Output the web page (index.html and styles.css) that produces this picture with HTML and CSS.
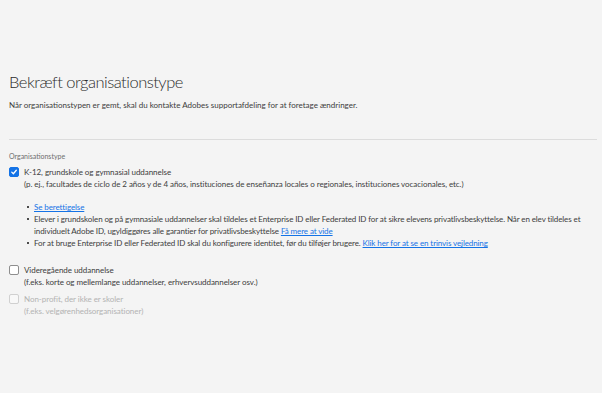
FILE: index.html
```html
<!DOCTYPE html>
<html lang="da">
<head>
<meta charset="utf-8">
<link rel="stylesheet" href="styles.css">
</head>
<body>
<main class="page">
  <h1 class="title">Bekræft organisationstype</h1>
  <p class="intro">Når organisationstypen er gemt, skal du kontakte Adobes supportafdeling for at foretage ændringer.</p>
  <hr class="divider">
  <div class="group-label">Organisationstype</div>

  <div class="option first">
    <span class="box checked"><svg viewBox="0 0 10 10" width="10" height="10"><path d="M2.2 5.2 L4.2 7.2 L7.9 2.8" fill="none" stroke="#fff" stroke-width="1.6" stroke-linecap="round" stroke-linejoin="round"/></svg></span>
    <div class="opt-text">
      <div class="opt-title">K-12, grundskole og gymnasial uddannelse</div>
      <div class="opt-sub">(p. ej., facultades de ciclo de 2 años y de 4 años, instituciones de enseñanza locales o regionales, instituciones vocacionales, etc.)</div>
      <ul class="notes">
        <li><a href="#">Se berettigelse</a></li>
        <li>Elever i grundskolen og på gymnasiale uddannelser skal tildeles et Enterprise ID eller Federated ID for at sikre elevens privatlivsbeskyttelse. Når en elev tildeles et<br>individuelt Adobe ID, ugyldiggøres alle garantier for privatlivsbeskyttelse <a href="#">Få mere at vide</a></li>
        <li>For at bruge Enterprise ID eller Federated ID skal du konfigurere identitet, før du tilføjer brugere. <a href="#">Klik her for at se en trinvis vejledning</a></li>
      </ul>
    </div>
  </div>

  <div class="option second">
    <span class="box"></span>
    <div class="opt-text">
      <div class="opt-title">Videregående uddannelse</div>
      <div class="opt-sub">(f.eks. korte og mellemlange uddannelser, erhvervsuddannelser osv.)</div>
    </div>
  </div>

  <div class="option third disabled">
    <span class="box"></span>
    <div class="opt-text">
      <div class="opt-title">Non-profit, der ikke er skoler</div>
      <div class="opt-sub">(f.eks. velgørenhedsorganisationer)</div>
    </div>
  </div>
</main>
</body>
</html>
```

FILE: styles.css
```css
html, body {
  margin: 0;
  padding: 0;
  background: #f4f4f4;
}
body {
  font-family: Lato, "Open Sans", sans-serif;
  color: #3c3c3c;
}
.page {
  padding: 71px 0 0 9px;
}
.title {
  margin: 0;
  font-size: 16.5px;
  font-weight: 300;
  color: #2c2c2c;
  line-height: 22px;
  letter-spacing: -0.5px;
}
.intro {
  margin: 6px 0 0;
  font-size: 8px;
  line-height: 12px;
  color: #3c3c3c;
}
.divider {
  margin: 28px 5px 0 0;
  border: 0;
  border-top: 1px solid #dcdcdc;
  height: 0;
}
.group-label {
  margin-top: 11px;
  font-size: 7px;
  line-height: 10px;
  color: #6e6e6e;
}
.option {
  display: flex;
  gap: 5px;
}
.option.first {
  margin-top: 5px;
}
.option.second {
  margin-top: 15px;
}
.option.third {
  margin-top: 5px;
}
.box {
  flex: none;
  width: 8px;
  height: 8px;
  border: 1px solid #8e8e8e;
  border-radius: 2px;
  background: #fff;
  margin-top: 1px;
  display: flex;
  align-items: center;
  justify-content: center;
}
.box.checked {
  background: #1473e6;
  border-color: #1473e6;
}
.box svg {
  display: block;
}
.opt-text {
  flex: 1;
  min-width: 0;
}
.opt-title, .opt-sub {
  font-size: 8px;
  line-height: 12px;
  color: #3c3c3c;
  letter-spacing: -0.05px;
}
.notes {
  margin: 11px 0 0;
  padding: 0 0 0 10px;
  font-size: 8px;
  line-height: 12px;
  letter-spacing: -0.1px;
  list-style: none;
}
.notes li {
  position: relative;
}
.notes li::before {
  content: "";
  position: absolute;
  left: -7px;
  top: 5px;
  width: 2px;
  height: 2px;
  background: #4b4b4b;
}
.notes a {
  color: #1473e6;
  text-decoration: underline;
}
.disabled .box {
  border-color: #d0d0d0;
  background: #f8f8f8;
}
.disabled .opt-title, .disabled .opt-sub {
  color: #b3b3b3;
}
```
